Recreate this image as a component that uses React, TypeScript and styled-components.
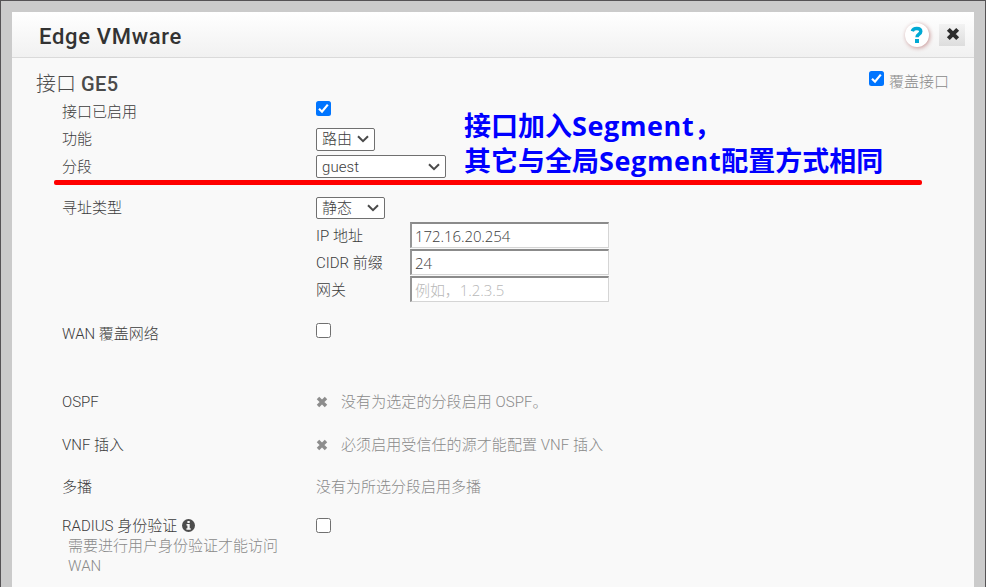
import React from "react";
import styled, { createGlobalStyle } from "styled-components";

const Global = createGlobalStyle`
  * { box-sizing: border-box; }
  body { margin: 0; overflow: hidden; font-family: "Open Sans", "Noto Sans CJK SC", sans-serif; }
`;

const Backdrop = styled.div`
  height: 587px;
  width: 986px;
  padding: 11px 11px 0;
  border: 1px solid #555355;
  border-bottom: 0;
  background: #cbcbcb;
`;

const Dialog = styled.section`
  position: relative;
  height: 575px;
  width: 962px;
  overflow: hidden;
  background: #f9f9f9;
`;

const Header = styled.header`
  display: flex;
  align-items: center;
  height: 46px;
  padding: 0 9px 0 27px;
  border-bottom: 1px solid #dadada;
  background: linear-gradient(#ffffff, #f1f1f1);
`;

const Title = styled.h1`
  flex: 1;
  margin: 0;
  padding-top: 4px;
  font: 500 22px/30px Roboto, sans-serif;
  letter-spacing: 0.7px;
  color: #333;
`;

const Help = styled.button`
  display: grid;
  place-items: center;
  width: 24px;
  height: 24px;
  margin-right: 10px;
  padding: 0;
  border: 0;
  border-radius: 50%;
  background: #fff;
  box-shadow: 1px 1px 4px #c89595;
`;

const Close = styled.button`
  display: grid;
  place-items: center;
  width: 26px;
  height: 22px;
  padding: 0 0 1px 1px;
  border: 0;
  background: linear-gradient(#f3f3f3, #dddddd);
`;

const Heading = styled.div`
  display: flex;
  justify-content: space-between;
  height: 40px;
  padding: 0 25px 0 24px;
`;

const SectionTitle = styled.h2`
  margin: 0;
  padding-top: 12px;
  font: 300 20px/28px Roboto, "Noto Sans CJK SC", sans-serif;
  color: #4a4a4a;
  b { font-weight: 500; letter-spacing: 0.5px; }
`;

const Override = styled.label`
  display: flex;
  gap: 5px;
  padding-top: 13px;
  font-size: 15px;
  line-height: 20px;
  font-weight: 300;
  color: #8a8a8a;
`;

const Row = styled.div<{ $h: number; $gap?: number }>`
  display: grid;
  grid-template-columns: 254px 1fr;
  align-items: center;
  height: ${(p) => p.$h}px;
  margin-top: ${(p) => p.$gap ?? 0}px;
  padding-left: 50px;
`;

const Text = styled.span<{ $muted?: boolean; $track?: number }>`
  font: 300 15px/20px Roboto, "Noto Sans CJK SC", sans-serif;
  letter-spacing: ${(p) => p.$track ?? 0}px;
  white-space: nowrap;
  color: ${(p) => (p.$muted ? "#8a8a8a" : "#3c3c3c")};
`;

const Box = styled.span<{ $on?: boolean; $up?: number }>`
  display: grid;
  place-items: center;
  width: 15px;
  height: 15px;
  margin-bottom: ${(p) => p.$up ?? 0}px;
  border: ${(p) => (p.$on ? "0" : "1px solid #707070")};
  border-radius: 2.5px;
  background: ${(p) => (p.$on ? "#0075ff" : "#fff")};
`;

const Select = styled.div<{ $w: number; $h: number }>`
  display: flex;
  align-items: center;
  justify-content: space-between;
  width: ${(p) => p.$w}px;
  height: ${(p) => p.$h}px;
  padding: 0 5px 0 5px;
  border: 1px solid #707070;
  border-radius: 2px;
  background: #fff;
`;

const Field = styled.div`
  display: grid;
  grid-template-columns: 94px 199px;
  align-items: center;
`;

const Input = styled.input`
  width: 199px;
  height: 26px;
  margin-bottom: 2px;
  padding: 0 3px;
  border: 1px solid #d5d5d5;
  border-top: 2px solid #8b8b8b;
  border-left: 2px solid #959595;
  border-radius: 0;
  background: #fff;
  font: 300 15px/20px "Open Sans", "Noto Sans CJK SC", sans-serif;
  letter-spacing: -0.08px;
  color: #3c3c3c;
  &::placeholder { color: #b8b8b8; opacity: 1; }
`;

const Status = styled.div`
  display: flex;
  align-items: center;
  gap: 13px;
`;

const LabelLine = styled.div`
  display: flex;
  align-items: center;
  gap: 5px;
`;

const Hint = styled.p`
  width: 286px;
  margin: -2px 0 0;
  padding-left: 56px;
  font: 300 15px/20px Roboto, "Noto Sans CJK SC", sans-serif;
  color: #8a8a8a;
`;

const Note = styled.p`
  position: absolute;
  left: 452px;
  top: 96px;
  margin: 0;
  font: 700 27px/35px "Open Sans", "Noto Sans CJK SC", sans-serif;
  white-space: nowrap;
  color: #0000ff;
  span { letter-spacing: 0.6px; }
`;

const Underline = styled.div`
  position: absolute;
  left: 42px;
  top: 168px;
  width: 868px;
  height: 5px;
  border-radius: 2px;
  background: #f00;
`;

const Check = ({ on, up }: { on?: boolean; up?: number }) => (
  <Box $on={on} $up={up}>
    {on && (
      <svg width="15" height="15" viewBox="0 0 15 15">
        <path d="M3 7.8 6 10.7 11.8 3.6" fill="none" stroke="#fff" strokeWidth="2.2" />
      </svg>
    )}
  </Box>
);

const Chevron = () => (
  <svg width="12" height="8" viewBox="0 0 12 8">
    <path d="M1 1.2 6 6.2 11 1.2" fill="none" stroke="#4a4a4a" strokeWidth="2" />
  </svg>
);

const Cross = ({ size, color }: { size: number; color: string }) => (
  <svg width={size} height={size} viewBox="0 0 12 12">
    <path d="M2 2 10 10M10 2 2 10" stroke={color} strokeWidth="3.5" />
  </svg>
);

const Info = () => (
  <svg width="13" height="13" viewBox="0 0 13 13">
    <circle cx="6.5" cy="6.5" r="6.5" fill="#4d4d4d" />
    <path d="M5.4 2h2.3v2H5.4zM4.5 5h3.2v4.3h1v1.5H4.4V9.3h1V6.5h-.9z" fill="#f9f9f9" />
  </svg>
);

const Question = () => (
  <svg width="14" height="18" viewBox="0 0 14 18">
    <path d="M2.3 5.2C3 2.8 4.8 2.5 6.8 2.5c2.5 0 4 1 4 3 0 2.7-3.8 2.7-3.8 5.8" fill="none" stroke="#00a9d4" strokeWidth="3.4" />
    <path d="M5 13h4v4H5z" fill="#00a9d4" />
  </svg>
);

export default function App() {
  return (
    <Backdrop>
      <Global />
      <Dialog>
        <Header>
          <Title>Edge VMware</Title>
          <Help aria-label="Help"><Question /></Help>
          <Close aria-label="Close"><Cross size={14} color="#2c2c2c" /></Close>
        </Header>
        <Heading>
          <SectionTitle>接口 <b>GE5</b></SectionTitle>
          <Override><Check on /><span>覆盖接口</span></Override>
        </Heading>
        <Row $h={27}><Text>接口已启用</Text><Check on up={6} /></Row>
        <Row $h={28}><Text>功能</Text><Select $w={59} $h={23}><Text>路由</Text><Chevron /></Select></Row>
        <Row $h={27}><Text>分段</Text><Select $w={130} $h={23}><Text $track={0.1}>guest</Text><Chevron /></Select></Row>
        <Row $h={28} $gap={14}><Text>寻址类型</Text><Select $w={69} $h={22}><Text>静态</Text><Chevron /></Select></Row>
        <Row $h={27}><span /><Field><Text>IP 地址</Text><Input defaultValue="172.16.20.254" /></Field></Row>
        <Row $h={27}><span /><Field><Text>CIDR 前缀</Text><Input defaultValue="24" /></Field></Row>
        <Row $h={28}><span /><Field><Text>网关</Text><Input placeholder="例如，1.2.3.5" /></Field></Row>
        <Row $h={27} $gap={16}><Text>WAN 覆盖网络</Text><Check up={6} /></Row>
        <Row $h={28} $gap={41}><Text>OSPF</Text><Status><Cross size={12} color="#8d8d8d" /><Text $muted $track={0.08}>没有为选定的分段启用 OSPF。</Text></Status></Row>
        <Row $h={28} $gap={15}><Text>VNF 插入</Text><Status><Cross size={12} color="#8d8d8d" /><Text $muted $track={0.08}>必须启用受信任的源才能配置 VNF 插入</Text></Status></Row>
        <Row $h={28} $gap={14}><Text>多播</Text><Text $muted>没有为所选分段启用多播</Text></Row>
        <Row $h={25} $gap={12}><LabelLine><Text>RADIUS 身份验证</Text><Info /></LabelLine><Check /></Row>
        <Hint>需要进行用户身份验证才能访问 WAN</Hint>
        <Note>接口加入<span>Segment</span>，<br />其它与全局<span>Segment</span>配置方式相同</Note>
        <Underline />
      </Dialog>
    </Backdrop>
  );
}
